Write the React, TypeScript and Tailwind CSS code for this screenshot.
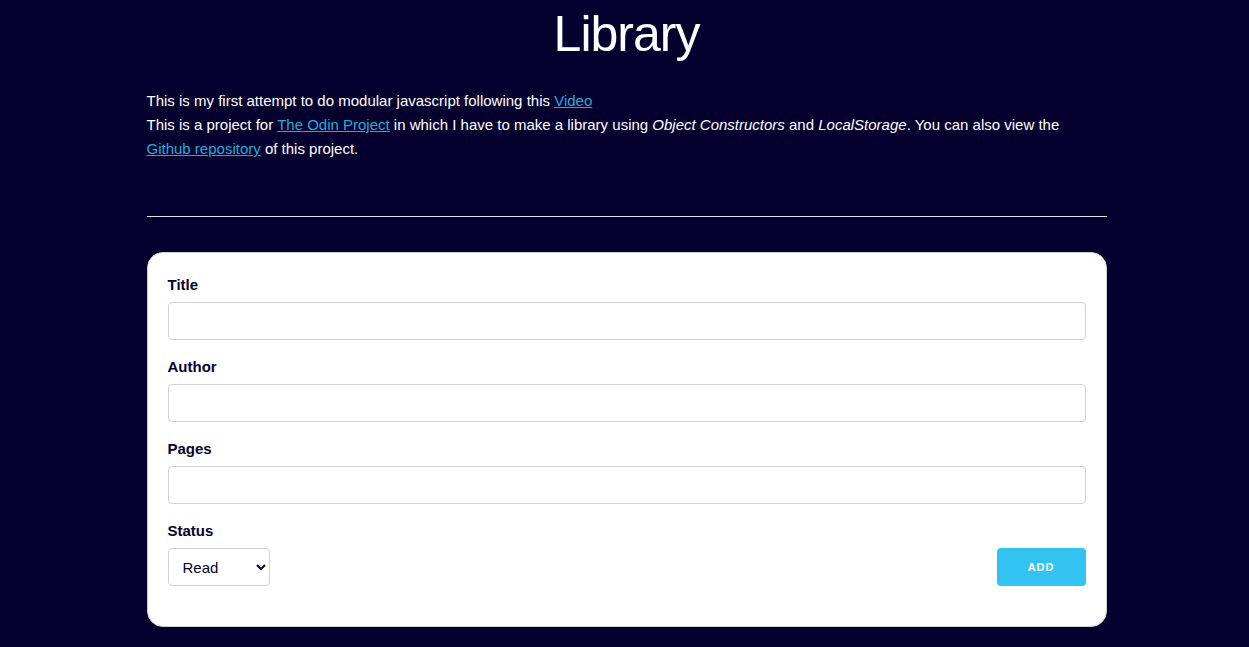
import React from "react";

const fieldClass =
  "block h-[38px] rounded-sm border border-[#d1d1d1] bg-white outline-none focus:border-[#33c3f0]";
const labelClass = "mb-[5px] block font-semibold";
const linkClass = "text-[#1eaedb] underline hover:text-[#0fa0ce]";

function TextField({ id, label, type = "text" }: { id: string; label: string; type?: string }) {
  return (
    <div className="mb-[15px]">
      <label htmlFor={id} className={labelClass}>
        {label}
      </label>
      <input id={id} name={id} type={type} className={`${fieldClass} w-full px-2.5 py-1.5`} />
    </div>
  );
}

export default function App() {
  return (
    <div className="min-h-screen bg-[#06002e] pl-1 font-['Liberation_Sans',Arial,sans-serif] text-[15px] leading-6 text-white">
      <main className="mx-auto max-w-[960px] pt-1 pb-5">
        <h1 className="mb-[25px] text-center text-[50px] leading-[60px] tracking-[-1px]">Library</h1>
        <p>
          This is my first attempt to do modular javascript following this{" "}
          <a href="#video" className={linkClass}>Video</a>
          <br />
          This is a project for{" "}
          <a href="#odin" className={linkClass}>The Odin Project</a> in which I have to make a
          library using <em>Object Constructors</em> and <em>LocalStorage</em>. You can also view the{" "}
          <a href="#repository" className={linkClass}>Github repository</a> of this project.
        </p>
        <hr className="mt-[55px] mb-[35px] border-t border-[#e1e1e1]" />
        <form
          className="rounded-2xl border border-[#d1d1d1] bg-white p-5 text-[#06002e]"
          onSubmit={(event) => event.preventDefault()}
        >
          <TextField id="title" label="Title" />
          <TextField id="author" label="Author" />
          <TextField id="pages" label="Pages" />
          <div className="mb-5 flex items-end justify-between">
            <div>
              <label htmlFor="status" className={labelClass}>
                Status
              </label>
              <select id="status" name="status" className={`${fieldClass} w-[102px] px-2.5 py-1.5`}>
                <option>Read</option>
                <option>Not read</option>
              </select>
            </div>
            <button
              type="submit"
              className="h-[38px] rounded-sm bg-[#33c3f0] px-[31px] text-[11px] leading-[38px] font-semibold tracking-[1px] text-white uppercase hover:bg-[#1eaedb]"
            >
              Add
            </button>
          </div>
        </form>
      </main>
    </div>
  );
}
